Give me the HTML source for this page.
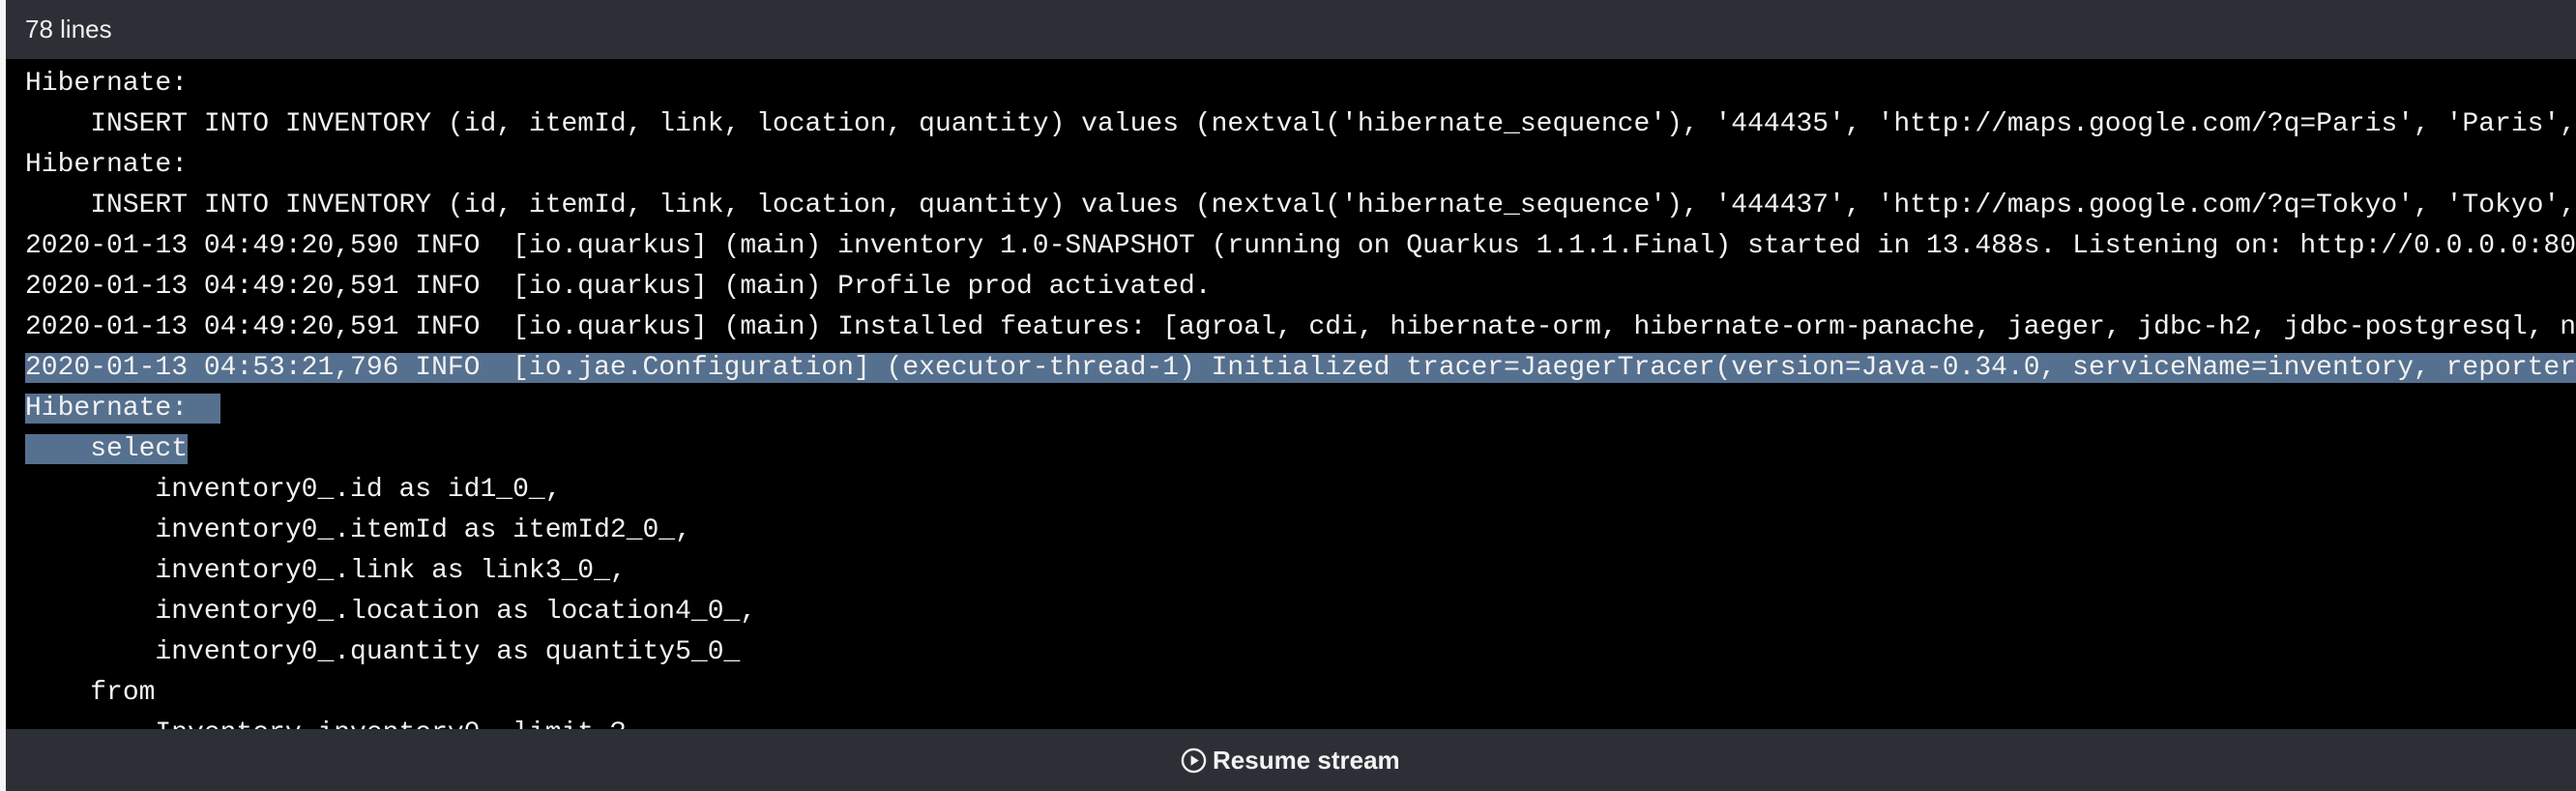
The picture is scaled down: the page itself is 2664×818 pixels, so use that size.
<!DOCTYPE html>
<html><head><meta charset="utf-8"><style>
html,body{margin:0;padding:0;width:2664px;height:818px;overflow:hidden;background:#f5f5f5;}
.hdr{position:absolute;left:6px;top:0;width:2658px;height:61px;background:#2c2f36;color:#f0f0f0;font-family:"Liberation Sans",sans-serif;font-size:26px;line-height:61px;padding-left:20px;box-sizing:border-box;}
.log{position:absolute;left:6px;top:61px;width:2658px;height:693px;background:#000;overflow:hidden;}
.log pre{margin:0;padding:5px 0 0 20px;font-family:"Liberation Mono","DejaVu Sans Mono",monospace;font-size:28px;line-height:42px;color:#f2f2f2;white-space:pre;}
.sel{background:#56708f;}
.ftr{position:absolute;left:6px;top:754px;width:2658px;height:64px;background:#2c2f36;}
.btn{position:absolute;left:1215px;top:0;height:64px;display:flex;align-items:center;color:#f2f2f2;font-family:"Liberation Sans",sans-serif;font-weight:bold;font-size:26px;}
.btn svg{margin-right:6px;}
</style></head><body>
<div class="hdr">78 lines</div>
<div class="log"><pre>Hibernate:
    INSERT INTO INVENTORY (id, itemId, link, location, quantity) values (nextval('hibernate_sequence'), '444435', 'http://maps.google.com/?q=Paris', 'Paris', 600);
Hibernate:
    INSERT INTO INVENTORY (id, itemId, link, location, quantity) values (nextval('hibernate_sequence'), '444437', 'http://maps.google.com/?q=Tokyo', 'Tokyo', 230);
2020-01-13 04:49:20,590 INFO  [io.quarkus] (main) inventory 1.0-SNAPSHOT (running on Quarkus 1.1.1.Final) started in 13.488s. Listening on: http://0.0.0.0:8080
2020-01-13 04:49:20,591 INFO  [io.quarkus] (main) Profile prod activated.
2020-01-13 04:49:20,591 INFO  [io.quarkus] (main) Installed features: [agroal, cdi, hibernate-orm, hibernate-orm-panache, jaeger, jdbc-h2, jdbc-postgresql, narayana-jta]
<span class="sel">2020-01-13 04:53:21,796 INFO  [io.jae.Configuration] (executor-thread-1) Initialized tracer=JaegerTracer(version=Java-0.34.0, serviceName=inventory, reporter=RemoteReporter)     </span>
<span class="sel">Hibernate:  </span>
<span class="sel">    select</span>
        inventory0_.id as id1_0_,
        inventory0_.itemId as itemId2_0_,
        inventory0_.link as link3_0_,
        inventory0_.location as location4_0_,
        inventory0_.quantity as quantity5_0_
    from
        Inventory inventory0_ limit ?
</pre></div>
<div class="ftr"><div class="btn"><svg width="27" height="27" viewBox="0 0 28 28"><circle cx="14" cy="14" r="12" fill="none" stroke="#f2f2f2" stroke-width="2.5"/><path d="M11 8.5 L19.5 14 L11 19.5 Z" fill="#f2f2f2"/></svg>Resume stream</div></div>
</body></html>
